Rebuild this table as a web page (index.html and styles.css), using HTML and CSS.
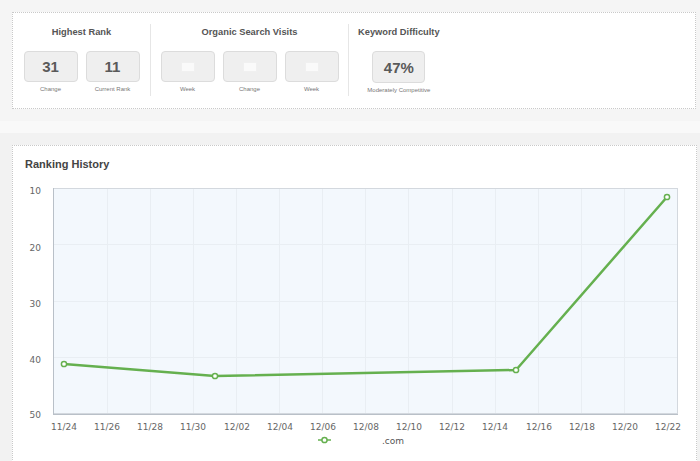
FILE: index.html
```html
<!DOCTYPE html>
<html>
<head>
<meta charset="utf-8">
<link rel="stylesheet" href="styles.css">
</head>
<body>
<div class="top-band">
  <div class="stats-card">
    <div class="stat-group g1">
      <div class="group-title">Highest Rank</div>
      <div class="boxes">
        <div class="stat"><div class="box">31</div><div class="lbl">Change</div></div>
        <div class="stat"><div class="box">11</div><div class="lbl">Current Rank</div></div>
      </div>
    </div>
    <div class="stat-group g2">
      <div class="group-title">Organic Search Visits</div>
      <div class="boxes">
        <div class="stat"><div class="box"><span class="blank"></span></div><div class="lbl">Week</div></div>
        <div class="stat"><div class="box"><span class="blank"></span></div><div class="lbl">Change</div></div>
        <div class="stat"><div class="box"><span class="blank"></span></div><div class="lbl">Week</div></div>
      </div>
    </div>
    <div class="stat-group g3">
      <div class="group-title">Keyword Difficulty</div>
      <div class="boxes">
        <div class="stat"><div class="box">47%</div><div class="lbl">Moderately Competitive</div></div>
      </div>
    </div>
  </div>
</div>
<div class="spacer"></div>
<div class="bottom-band">
  <div class="chart-card">
    <h2 class="chart-title">Ranking History</h2>
    <svg class="chart" width="684" height="300" viewBox="0 0 684 300">
      <rect x="40" y="12" width="625" height="226" fill="#f3f8fd"/>
      <g stroke="#e9eef3" stroke-width="1">
        <line x1="94.5" y1="12" x2="94.5" y2="238"/>
        <line x1="137.5" y1="12" x2="137.5" y2="238"/>
        <line x1="180.5" y1="12" x2="180.5" y2="238"/>
        <line x1="223.5" y1="12" x2="223.5" y2="238"/>
        <line x1="266.5" y1="12" x2="266.5" y2="238"/>
        <line x1="309.5" y1="12" x2="309.5" y2="238"/>
        <line x1="352.5" y1="12" x2="352.5" y2="238"/>
        <line x1="395.5" y1="12" x2="395.5" y2="238"/>
        <line x1="439.5" y1="12" x2="439.5" y2="238"/>
        <line x1="482.5" y1="12" x2="482.5" y2="238"/>
        <line x1="525.5" y1="12" x2="525.5" y2="238"/>
        <line x1="568.5" y1="12" x2="568.5" y2="238"/>
        <line x1="611.5" y1="12" x2="611.5" y2="238"/>
        <line x1="40" y1="68.5" x2="665" y2="68.5"/>
        <line x1="40" y1="125.5" x2="665" y2="125.5"/>
        <line x1="40" y1="181.5" x2="665" y2="181.5"/>
      </g>
      <rect x="40.5" y="12.5" width="624" height="225" fill="none" stroke="#d3d8de" stroke-width="1"/>
      <line x1="40.5" y1="12" x2="40.5" y2="238" stroke="#b9c0c8"/>
      <line x1="40" y1="238.5" x2="665" y2="238.5" stroke="#b9c0c8"/>
      <g class="ylab" text-anchor="end">
        <text x="28" y="18">10</text>
        <text x="28" y="75">20</text>
        <text x="28" y="131">30</text>
        <text x="28" y="187">40</text>
        <text x="28" y="242">50</text>
      </g>
      <g class="xlab" text-anchor="middle">
        <text x="51" y="254">11/24</text>
        <text x="94" y="254">11/26</text>
        <text x="137" y="254">11/28</text>
        <text x="180" y="254">11/30</text>
        <text x="224" y="254">12/02</text>
        <text x="267" y="254">12/04</text>
        <text x="310" y="254">12/06</text>
        <text x="353" y="254">12/08</text>
        <text x="396" y="254">12/10</text>
        <text x="439" y="254">12/12</text>
        <text x="482" y="254">12/14</text>
        <text x="526" y="254">12/16</text>
        <text x="569" y="254">12/18</text>
        <text x="612" y="254">12/20</text>
        <text x="655" y="254">12/22</text>
      </g>
      <polyline points="51,188 202,200 503,194 654,21" fill="none" stroke="#65b04f" stroke-width="2.5" stroke-linejoin="round"/>
      <g fill="#fff" stroke="#65b04f" stroke-width="1.5">
        <circle cx="51" cy="188" r="2.6"/>
        <circle cx="202" cy="200" r="2.6"/>
        <circle cx="503" cy="194" r="2.6"/>
        <circle cx="654" cy="21" r="2.6"/>
      </g>
      <line x1="305" y1="264" x2="318" y2="264" stroke="#65b04f" stroke-width="1.5"/>
      <circle cx="311.5" cy="264" r="2.6" fill="#fff" stroke="#65b04f" stroke-width="1.5"/>
      <text class="legend" x="369" y="268">.com</text>
    </svg>
  </div>
</div>
</body>
</html>
```
FILE: styles.css
```css
html, body {
  margin: 0;
  padding: 0;
}
body {
  background: #f3f3f3;
  font-family: "Liberation Sans", Arial, sans-serif;
  width: 700px;
  height: 461px;
  overflow: hidden;
}
.top-band {
  background: #f5f5f5;
  padding: 12px 4px 12px 12px;
}
.stats-card {
  background: #fff;
  border: 1px dotted #c9c9c9;
  height: 95px;
  display: flex;
  align-items: flex-start;
}
.stat-group {
  margin-top: 11px;
  height: 72px;
  text-align: center;
  box-sizing: border-box;
  padding-top: 2px;
}
.g1 {
  width: 138px;
  border-right: 1px solid #e6e6e6;
}
.g2 {
  width: 198px;
  border-right: 1px solid #e6e6e6;
}
.g3 {
  margin-left: 9px;
}
.group-title {
  font-size: 9.3px;
  font-weight: bold;
  color: #555;
  line-height: 12px;
  height: 12px;
}
.boxes {
  display: flex;
  justify-content: center;
  gap: 8px;
  margin-top: 13px;
}
.stat {
  display: flex;
  flex-direction: column;
  align-items: center;
}
.box {
  width: 52px;
  height: 29px;
  box-sizing: content-box;
  background: #efefef;
  border: 1px solid #dcdcdc;
  border-radius: 4px;
  display: flex;
  align-items: center;
  justify-content: center;
  font-size: 15px;
  font-weight: bold;
  color: #5a5a5a;
}
.g3 .box {
  width: 51px;
  height: 30px;
}
.blank {
  display: block;
  width: 12px;
  height: 8px;
  background: #fafafa;
  border: 1px solid #f0f0f0;
}
.lbl {
  font-size: 6px;
  color: #777;
  margin-top: 4px;
  white-space: nowrap;
  line-height: 7px;
}
.spacer {
  height: 12px;
  background: #f9f9f9;
}
.bottom-band {
  background: #f2f2f2;
  padding: 12px 3px 0 12px;
}
.chart-card {
  background: #fff;
  border: 1px dotted #c9c9c9;
  border-bottom: none;
  height: 330px;
}
.chart-title {
  margin: 0;
  padding: 10px 0 0 12px;
  height: 20px;
  font-size: 11px;
  font-weight: bold;
  color: #444;
  line-height: 16px;
}
.chart {
  display: block;
}
.ylab text, .xlab text, .legend {
  font-family: "DejaVu Sans", Verdana, sans-serif;
  font-size: 9px;
  fill: #666;
}
.legend {
  fill: #555;
}
```
